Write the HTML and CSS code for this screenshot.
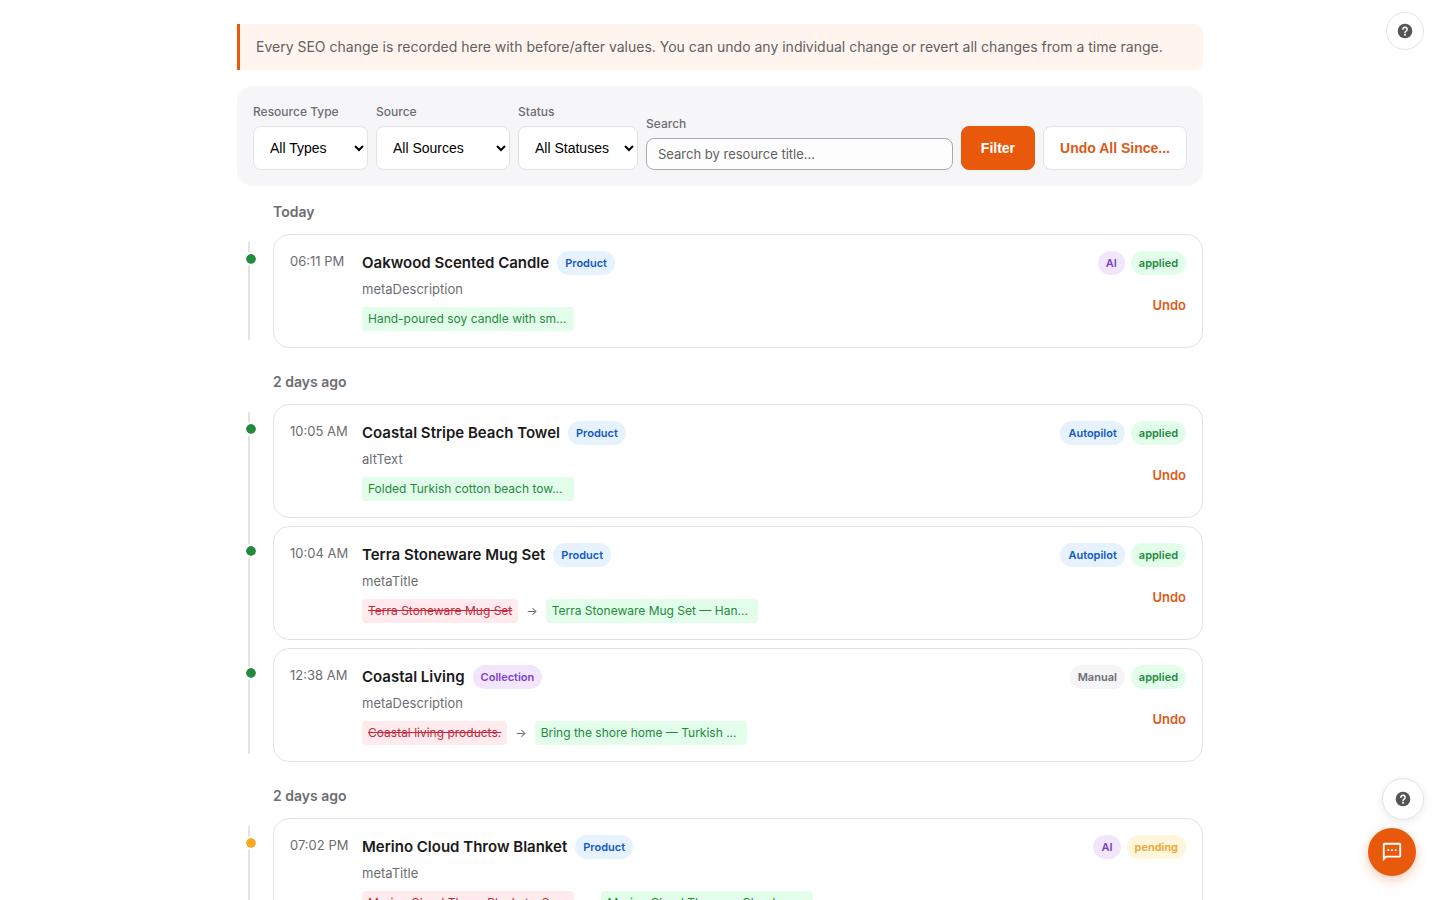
FILE: index.html
```html
<!DOCTYPE html>
<html lang="en">
<head>
<meta charset="utf-8">
<meta name="viewport" content="width=device-width, initial-scale=1">
<title>Change history</title>
<link rel="stylesheet" href="styles.css">
</head>
<body>
<main class="page">
  <p class="banner">Every SEO change is recorded here with before/after values. You can undo any individual change or revert all changes from a time range.</p>

  <form class="filters">
    <div class="field">
      <label for="type">Resource Type</label>
      <select id="type" class="select select-type"><option>All Types</option></select>
    </div>
    <div class="field">
      <label for="source">Source</label>
      <select id="source" class="select select-source"><option>All Sources</option></select>
    </div>
    <div class="field">
      <label for="status">Status</label>
      <select id="status" class="select select-status"><option>All Statuses</option></select>
    </div>
    <div class="field field-search">
      <label for="search">Search</label>
      <input id="search" class="search" type="text" placeholder="Search by resource title...">
    </div>
    <button class="btn btn-primary" type="button">Filter</button>
    <button class="btn btn-outline" type="button">Undo All Since...</button>
  </form>

  <section class="group">
    <h2 class="group-title">Today</h2>
    <div class="timeline">
      <article class="card">
        <span class="dot"></span>
        <time class="time">06:11 PM</time>
        <div class="body">
          <div class="title-row"><h3 class="title">Oakwood Scented Candle</h3><span class="badge blue">Product</span></div>
          <div class="attr">metaDescription</div>
          <div class="diff"><span class="chip new">Hand-poured soy candle with sm...</span></div>
        </div>
        <div class="side">
          <div class="badges"><span class="badge purple">AI</span><span class="badge green">applied</span></div>
          <button class="undo" type="button">Undo</button>
        </div>
      </article>
    </div>
  </section>

  <section class="group">
    <h2 class="group-title">2 days ago</h2>
    <div class="timeline">
      <article class="card">
        <span class="dot"></span>
        <time class="time">10:05 AM</time>
        <div class="body">
          <div class="title-row"><h3 class="title">Coastal Stripe Beach Towel</h3><span class="badge blue">Product</span></div>
          <div class="attr">altText</div>
          <div class="diff"><span class="chip new">Folded Turkish cotton beach tow...</span></div>
        </div>
        <div class="side">
          <div class="badges"><span class="badge blue">Autopilot</span><span class="badge green">applied</span></div>
          <button class="undo" type="button">Undo</button>
        </div>
      </article>
      <article class="card">
        <span class="dot"></span>
        <time class="time">10:04 AM</time>
        <div class="body">
          <div class="title-row"><h3 class="title">Terra Stoneware Mug Set</h3><span class="badge blue">Product</span></div>
          <div class="attr">metaTitle</div>
          <div class="diff"><del class="chip old">Terra Stoneware Mug Set</del><span class="arrow">→</span><span class="chip new">Terra Stoneware Mug Set — Han...</span></div>
        </div>
        <div class="side">
          <div class="badges"><span class="badge blue">Autopilot</span><span class="badge green">applied</span></div>
          <button class="undo" type="button">Undo</button>
        </div>
      </article>
      <article class="card">
        <span class="dot"></span>
        <time class="time">12:38 AM</time>
        <div class="body">
          <div class="title-row"><h3 class="title">Coastal Living</h3><span class="badge purple">Collection</span></div>
          <div class="attr">metaDescription</div>
          <div class="diff"><del class="chip old">Coastal living products.</del><span class="arrow">→</span><span class="chip new">Bring the shore home — Turkish ...</span></div>
        </div>
        <div class="side">
          <div class="badges"><span class="badge gray">Manual</span><span class="badge green">applied</span></div>
          <button class="undo" type="button">Undo</button>
        </div>
      </article>
    </div>
  </section>

  <section class="group">
    <h2 class="group-title">2 days ago</h2>
    <div class="timeline">
      <article class="card">
        <span class="dot dot-pending"></span>
        <time class="time">07:02 PM</time>
        <div class="body">
          <div class="title-row"><h3 class="title">Merino Cloud Throw Blanket</h3><span class="badge blue">Product</span></div>
          <div class="attr">metaTitle</div>
          <div class="diff"><del class="chip old wide">Merino Cloud Throw Blanket – S...</del><span class="arrow">→</span><span class="chip new">Merino Cloud Throw — Cloud-s...</span></div>
        </div>
        <div class="side">
          <div class="badges"><span class="badge purple">AI</span><span class="badge yellow">pending</span></div>
        </div>
      </article>
    </div>
  </section>
</main>

<button class="float help-top" type="button" aria-label="Help">
  <svg width="16" height="16" viewBox="0 0 16 16"><circle cx="8" cy="8" r="7.3" fill="#555"/><path d="M5.9 6.3a2.1 2.1 0 1 1 3.2 1.8c-.7.4-1.1.7-1.1 1.3" fill="none" stroke="#fff" stroke-width="1.6" stroke-linecap="round"/><circle cx="8" cy="11.7" r="1" fill="#fff"/></svg>
</button>
<button class="float help-bottom" type="button" aria-label="Help center">
  <svg width="16" height="16" viewBox="0 0 16 16"><circle cx="8" cy="8" r="7.3" fill="#555"/><path d="M5.9 6.3a2.1 2.1 0 1 1 3.2 1.8c-.7.4-1.1.7-1.1 1.3" fill="none" stroke="#fff" stroke-width="1.6" stroke-linecap="round"/><circle cx="8" cy="11.7" r="1" fill="#fff"/></svg>
</button>
<button class="float chat" type="button" aria-label="Chat">
  <svg width="22" height="22" viewBox="0 0 24 24"><path d="M20 2H4c-1.1 0-2 .9-2 2v18l4-4h14c1.1 0 2-.9 2-2V4c0-1.1-.9-2-2-2zm0 14H5.2L4 17.2V4h16z" fill="#fff"/><path d="M7 9h2v2H7zM11 9h2v2h-2zM15 9h2v2h-2z" fill="#fff"/></svg>
</button>
</body>
</html>
```
FILE: styles.css
```css
* { box-sizing: border-box; }
html { scrollbar-width: none; }
body {
  margin: 0;
  background: #fff;
  color: #1a1a1a;
  font: 14px/20px Inter, sans-serif;
}
.page { max-width: 966px; margin: 0 auto; padding: 24px 0; }

.banner {
  margin: 0 0 16px;
  padding: 12px 16px;
  border-left: 3px solid #e8590c;
  border-radius: 0 8px 8px 0;
  background: #fff4ee;
  color: #616161;
  line-height: 22px;
}

.filters {
  display: flex;
  align-items: flex-end;
  gap: 8px;
  margin-bottom: 16px;
  padding: 16px;
  border-radius: 16px;
  background: #f6f6f8;
}
.field { display: flex; flex-direction: column; gap: 4px; }
.field-search { flex: 1; min-width: 0; }
.field label { color: #6d6d72; font-size: 12px; font-weight: 500; }
.select {
  height: 44px;
  padding: 0 0 0 12px;
  border: 1px solid #e3e3e5;
  border-radius: 8px;
  background-color: #fff;
  color: #000;
  font: 14px "Liberation Sans", Arial, sans-serif;
}
.select-type { width: 115px; }
.select-source { width: 134px; }
.select-status { width: 120px; }
.search {
  width: 100%;
  height: 32px;
  padding: 0 11px;
  border: 1px solid #aaa;
  border-radius: 8px;
  background: #fdfdfd;
  color: #303030;
  font: 13px Inter, sans-serif;
}
.search::placeholder { color: #616161; opacity: 1; }
.btn {
  height: 44px;
  padding: 0 16px;
  border: 1px solid #e3e3e5;
  border-radius: 8px;
  background: #fff;
  color: #dc5a16;
  font: bold 14px "Liberation Sans", Arial, sans-serif;
  white-space: nowrap;
}
.btn-primary { padding: 0 19px; border-color: #e8590c; background: #e8590c; color: #fff; }

.group { margin-bottom: 24px; padding-left: 36px; }
.group-title { margin: 0 0 12px; color: #6d6d72; font-size: 14px; font-weight: 600; line-height: 20px; }
.timeline { position: relative; display: flex; flex-direction: column; gap: 8px; }
.timeline::before {
  content: "";
  position: absolute;
  top: 8px;
  bottom: 8px;
  left: -25px;
  width: 2px;
  background: #e3e3e5;
}
.card {
  position: relative;
  display: flex;
  padding: 16px;
  border: 1px solid #e3e3e5;
  border-radius: 16px;
  background: #fff;
}
.dot {
  position: absolute;
  top: 17px;
  left: -30px;
  width: 14px;
  height: 14px;
  border: 2px solid #fff;
  border-radius: 50%;
  background: #248a3d;
  background-clip: padding-box;
}
.dot-pending { background-color: #f9a825; }
.time { flex: 0 0 72px; color: #6d6d72; font-size: 13px; white-space: nowrap; }
.body { flex: 1; min-width: 0; }
.title-row { display: flex; align-items: center; gap: 8px; }
.title { margin: 0; font-size: 15px; font-weight: 600; line-height: 24px; }
.attr { margin: 4px 0 8px; color: #6d6d72; font-size: 13px; }
.diff { display: flex; align-items: center; gap: 8px; }
.chip {
  padding: 0 6px;
  border-radius: 4px;
  font-size: 12px;
  line-height: 24px;
  white-space: nowrap;
}
.new, .wide { min-width: 212px; }
.new { background: #e3fdeb; color: #248a3d; }
.old { background: #ffebee; color: #c62839; }
.arrow { color: #6d6d72; font-size: 12px; }
.badge {
  padding: 0 8px;
  border-radius: 12px;
  font-size: 11px;
  font-weight: 600;
  line-height: 24px;
}
.blue { background: #e6f2fd; color: #1259c3; }
.purple { background: #f2e6fd; color: #7a3fd0; }
.green { background: #e3fdeb; color: #248a3d; }
.gray { background: #f5f5f7; color: #6d6d72; }
.yellow { background: #fff6dc; color: #efa52e; }
.side { display: flex; flex-direction: column; align-items: flex-end; gap: 8px; }
.badges { display: flex; gap: 6px; }
.undo {
  height: 44px;
  padding: 0;
  border: 0;
  background: none;
  color: #dc5a16;
  font: 600 13px Inter, sans-serif;
}

.float {
  position: fixed;
  display: flex;
  align-items: center;
  justify-content: center;
  padding: 0;
  border: 1px solid #e3e3e5;
  border-radius: 50%;
  background: #fff;
}
.help-top { top: 12px; right: 16px; width: 38px; height: 38px; }
.help-bottom { right: 16px; bottom: 80px; width: 42px; height: 42px; box-shadow: 0 2px 8px rgba(0, 0, 0, 0.08); }
.chat {
  right: 24px;
  bottom: 24px;
  width: 48px;
  height: 48px;
  border: 0;
  background: #e8590c;
  box-shadow: 0 4px 12px rgba(232, 89, 12, 0.3);
}
```
